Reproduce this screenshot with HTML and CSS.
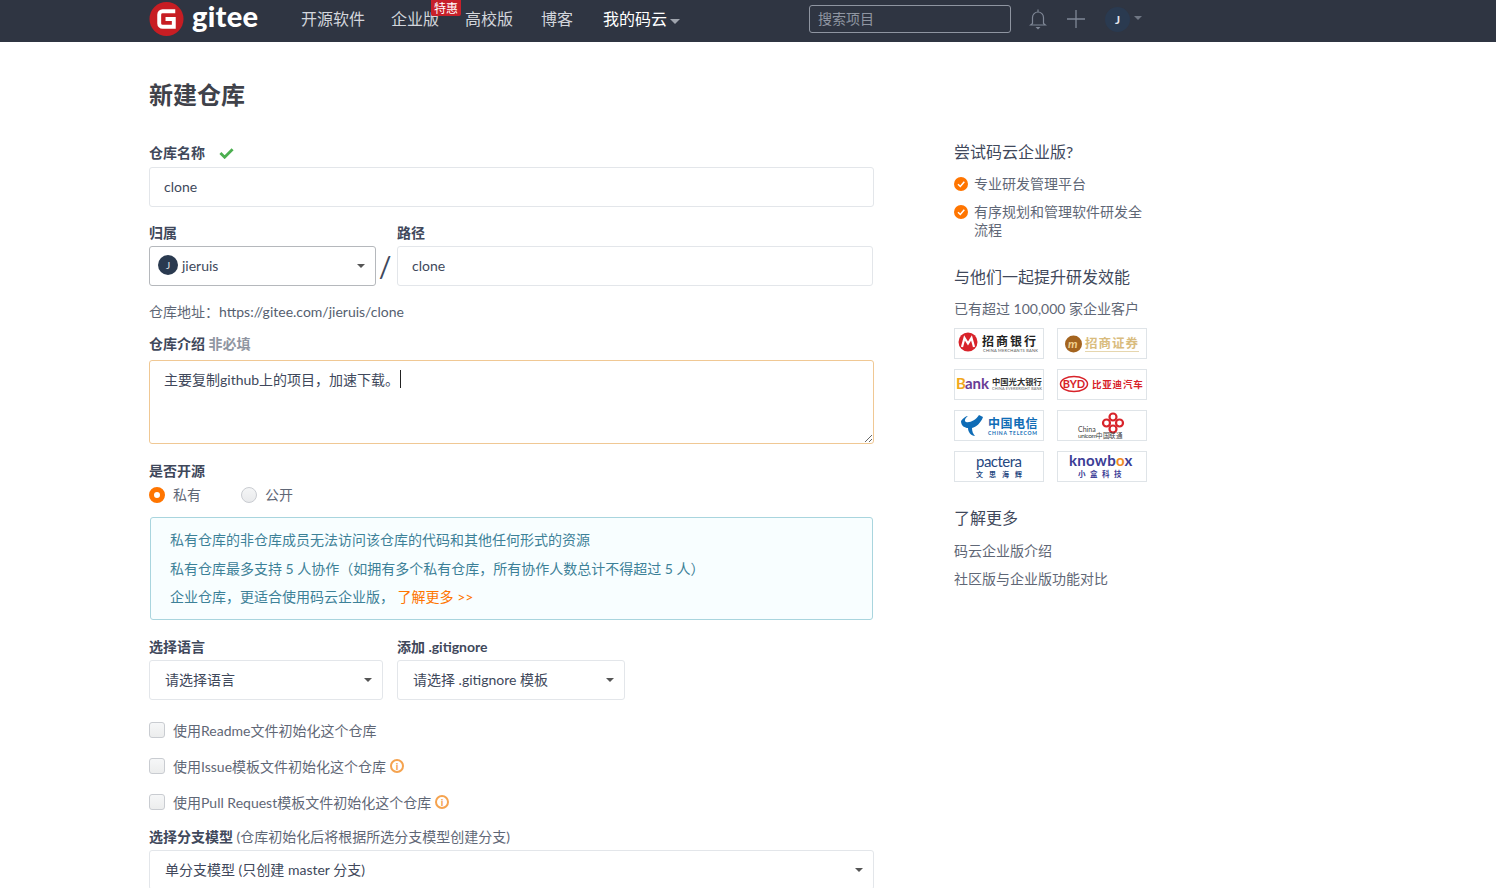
FILE: index.html
```html
<!DOCTYPE html>
<html lang="zh-CN">
<head>
  <meta charset="UTF-8">
  <title>新建仓库 - Gitee</title>
  <link rel="stylesheet" href="styles.css">
</head>
<body>
  <header class="topbar">
    <a class="brand" href="#">
      <svg class="brand-mark" viewBox="0 0 36 36" width="35" height="36">
        <circle cx="18" cy="18" r="17.500" fill="#c71d23"/>
        <path d="M27 10H14a3.500 3.500 0 0 0-3.500 3.500v9a3.500 3.500 0 0 0 3.500 3.500h11.500v-8H17" fill="none" stroke="#fff" stroke-width="4"/>
      </svg>
      <span class="brand-name">gitee</span>
    </a>
    <nav class="nav">
      <a class="nav-link w-open" href="#">开源软件</a>
      <a class="nav-link w-ent" href="#">企业版<span class="nav-badge">特惠</span></a>
      <a class="nav-link w-edu" href="#">高校版</a>
      <a class="nav-link w-blog" href="#">博客</a>
      <a class="nav-link nav-mine" href="#">我的码云<i class="caret caret-nav"></i></a>
    </nav>
    <input class="search" type="text" placeholder="搜索项目">
    <svg class="top-icon bell" viewBox="0 0 18 22" width="18" height="22">
      <path d="M9 1.500v2M3.500 15.500V9.500a5.500 5.500 0 0 1 11 0v6l2 1.500H1.500z" fill="none" stroke="#7f8796" stroke-width="1.200"/>
      <path d="M6.500 19h5L9 21.500z" fill="#7f8796"/>
    </svg>
    <svg class="top-icon plus" viewBox="0 0 18 18" width="18" height="18">
      <path d="M9 0v18M0 9h18" stroke="#7f8796" stroke-width="1.300"/>
    </svg>
    <span class="top-avatar">J</span>
    <i class="caret caret-user"></i>
  </header>

  <div class="page">
    <main class="main">
      <h1 class="title">新建仓库</h1>

      <label class="label label-first">仓库名称
        <svg class="ok" viewBox="0 0 16 12" width="15" height="12"><path d="M1.500 6l4.500 4.500L14.500 2" fill="none" stroke="#4caf50" stroke-width="3"/></svg>
      </label>
      <input class="input" type="text" value="clone">

      <div class="owner-row">
        <div class="owner-col">
          <label class="label">归属</label>
          <div class="select select-owner">
            <span class="owner-avatar">J</span>jieruis
            <i class="caret caret-select"></i>
          </div>
        </div>
        <span class="slash">/</span>
        <div class="path-col">
          <label class="label">路径</label>
          <input class="input" type="text" value="clone">
        </div>
      </div>

      <p class="address">仓库地址：<span class="address-url">https://gitee.com/jieruis/clone</span></p>

      <label class="label label-desc">仓库介绍 <span class="optional">非必填</span></label>
      <div class="desc-wrap">
        <textarea class="desc">主要复制github上的项目，加速下载。</textarea>
        <span class="text-caret"></span>
      </div>

      <label class="label label-open">是否开源</label>
      <div class="radios">
        <span class="radio radio-on"></span><span class="radio-text">私有</span>
        <span class="radio"></span><span class="radio-text">公开</span>
      </div>

      <div class="notice">
        <p>私有仓库的非仓库成员无法访问该仓库的代码和其他任何形式的资源</p>
        <p>私有仓库最多支持 5 人协作（如拥有多个私有仓库，所有协作人数总计不得超过 5 人）</p>
        <p>企业仓库，更适合使用码云企业版， <a class="more" href="#">了解更多 &gt;&gt;</a></p>
      </div>

      <div class="lang-row">
        <div class="lang-col">
          <label class="label">选择语言</label>
          <div class="select select-plain">请选择语言<i class="caret caret-select"></i></div>
        </div>
        <div class="ignore-col">
          <label class="label">添加 .gitignore</label>
          <div class="select select-plain">请选择 .gitignore 模板<i class="caret caret-select"></i></div>
        </div>
      </div>

      <div class="check"><span class="box"></span>使用Readme文件初始化这个仓库</div>
      <div class="check"><span class="box"></span>使用Issue模板文件初始化这个仓库<span class="info">i</span></div>
      <div class="check"><span class="box"></span>使用Pull Request模板文件初始化这个仓库<span class="info">i</span></div>

      <label class="label label-branch">选择分支模型 <span class="label-note">(仓库初始化后将根据所选分支模型创建分支)</span></label>
      <div class="select select-plain select-branch">单分支模型 (只创建 master 分支)<i class="caret caret-select"></i></div>
    </main>

    <aside class="side">
      <h3 class="side-title side-first">尝试码云企业版?</h3>
      <ul class="points">
        <li><span class="tick"><svg viewBox="0 0 14 14" width="14" height="14"><path d="M4 7.200l2.300 2.300L10.300 4.800" fill="none" stroke="#fff" stroke-width="1.500"/></svg></span>专业研发管理平台</li>
        <li><span class="tick"><svg viewBox="0 0 14 14" width="14" height="14"><path d="M4 7.200l2.300 2.300L10.300 4.800" fill="none" stroke="#fff" stroke-width="1.500"/></svg></span>有序规划和管理软件研发全流程</li>
      </ul>

      <h3 class="side-title side-second">与他们一起提升研发效能</h3>
      <p class="side-text">已有超过 100,000 家企业客户</p>

      <div class="logos">
        <div class="logo">
          <svg viewBox="1 1 88 29" width="88" height="29">
            <circle cx="14" cy="14" r="9.500" fill="#d8232a"/>
            <path d="M8 19l2.500-9 3.500 5.500 3.500-5.500 2.500 9" fill="none" stroke="#fff" stroke-width="2.200"/>
            <text x="28" y="18" class="lg-cn" font-size="12" letter-spacing="2" fill="#222">招商银行</text>
            <text x="29" y="24" class="lg-en" font-size="4" textLength="55" fill="#555">CHINA MERCHANTS BANK</text>
          </svg>
        </div>
        <div class="logo">
          <svg viewBox="1 1 88 29" width="88" height="29">
            <circle cx="16.500" cy="16" r="8.500" fill="#a4641f"/>
            <text x="11" y="20" class="lg-en" font-size="12" font-style="italic" font-weight="700" fill="#f1d08f">m</text>
            <text x="28" y="20" class="lg-cn" font-size="12.500" letter-spacing="1" fill="#d9bc7e">招商证券</text>
            <rect x="28" y="23" width="54" height="1" fill="#e6d6ae"/>
          </svg>
        </div>
        <div class="logo">
          <svg viewBox="1 1 88 29" width="88" height="29">
            <text x="2" y="20" class="lg-en" font-size="15" font-weight="700" fill="#f1a81c">B</text>
            <text x="11" y="20" class="lg-en" font-size="15" font-weight="700" textLength="24" fill="#6a3d95">ank</text>
            <text x="38" y="16" class="lg-cn" font-size="8.300" fill="#333">中国光大银行</text>
            <text x="38" y="21" class="lg-en" font-size="3.800" textLength="50" fill="#666">CHINA EVERBRIGHT BANK</text>
          </svg>
        </div>
        <div class="logo">
          <svg viewBox="1 1 88 29" width="88" height="29">
            <ellipse cx="17" cy="15" rx="13.500" ry="7.500" fill="none" stroke="#d8232a" stroke-width="1.500"/>
            <text x="17" y="19" class="lg-en" text-anchor="middle" font-size="11" font-weight="700" fill="#d8232a">BYD</text>
            <text x="35" y="19" class="lg-cn" font-size="9.500" letter-spacing="0.800" fill="#d8232a">比亚迪汽车</text>
          </svg>
        </div>
        <div class="logo">
          <svg viewBox="1 1 88 29" width="88" height="29">
            <path d="M7 11C9 8 12 6 14 6 11 8 10 11 12 12 16 13 22 10 25 5L29 7C27 13 22 17 18 18 18 21 19 24 21 26 17 26 14 22 14 18 11 18 7 16 7 11Z" fill="#0f6cb6"/>
            <text x="34" y="18" class="lg-cn" font-size="12" letter-spacing="0.500" fill="#0f6cb6">中国电信</text>
            <text x="34" y="25" class="lg-en" font-size="5" font-weight="700" textLength="49" fill="#0f6cb6">CHINA TELECOM</text>
          </svg>
        </div>
        <div class="logo">
          <svg viewBox="1 1 88 29" width="88" height="29">
            <g fill="none" stroke="#d8232a" stroke-width="2.200">
              <circle cx="56" cy="7" r="3.500"/><circle cx="49.500" cy="13" r="3.500"/><circle cx="62.500" cy="13" r="3.500"/><circle cx="56" cy="19" r="3.500"/>
            </g>
            <text x="21" y="22" class="lg-en" font-size="7" fill="#444">China</text>
            <text x="21" y="28" class="lg-en" font-size="6.500" textLength="45" fill="#444">unicom中国联通</text>
          </svg>
        </div>
        <div class="logo">
          <svg viewBox="1 1 88 29" width="88" height="29">
            <text x="22" y="16" class="lg-en" font-size="15" font-weight="400" textLength="46" fill="#26487f">pactera</text>
            <text x="22" y="26" class="lg-cn" font-size="7" font-weight="400" letter-spacing="6" fill="#26487f">文思海辉</text>
          </svg>
        </div>
        <div class="logo">
          <svg viewBox="1 1 88 29" width="88" height="29">
            <text x="12" y="15" class="lg-en" font-size="15" font-weight="700" letter-spacing="0.300" fill="#3b3d96">knowb<tspan fill="#f08a24">o</tspan>x</text>
            <text x="21" y="26" class="lg-cn" font-size="7.500" font-weight="400" letter-spacing="4.500" fill="#3b3d96">小盒科技</text>
          </svg>
        </div>
      </div>

      <h3 class="side-title side-third">了解更多</h3>
      <a class="side-link" href="#">码云企业版介绍</a>
      <a class="side-link" href="#">社区版与企业版功能对比</a>
    </aside>
  </div>
</body>
</html>
```

FILE: styles.css
```css
* { box-sizing: border-box; }
html, body { height: 888px; overflow: hidden; }
body {
  margin: 0;
  background: #fff;
  color: #40485b;
  font-family: "Lato", "Noto Sans CJK SC", sans-serif;
  font-size: 14px;
}
a { text-decoration: none; color: inherit; }
p, h1, h3, ul { margin: 0; padding: 0; }

/* top bar */
.topbar {
  display: flex;
  align-items: center;
  height: 42px;
  padding-left: 149px;
  background: #2f3542;
}
.brand { display: flex; align-items: center; width: 152px; }
.brand-name {
  margin-left: 8px;
  color: #fff;
  font-family: "Lato", sans-serif;
  font-size: 29px;
  font-weight: 900;
  line-height: 36px;
  letter-spacing: 0.3px;
  position: relative;
  top: -5px;
}
.brand-mark { flex: none; position: relative; top: -2px; }
.nav { display: flex; width: 508px; margin-bottom: 4px; color: #d3d6dc; font-size: 16px; line-height: 38px; }
.nav-link { position: relative; white-space: nowrap; }
.w-open { width: 90px; }
.w-ent { width: 74px; }
.w-edu { width: 76px; }
.w-blog { width: 62px; }
.nav-mine { color: #fff; }
.nav-badge {
  position: absolute;
  left: 40px;
  top: 0;
  width: 30px;
  height: 16px;
  background: #c7202a;
  border-radius: 0 0 2px 2px;
  color: #fff;
  font-size: 12px;
  line-height: 17px;
  text-align: center;
}
.caret {
  display: inline-block;
  width: 0;
  height: 0;
  border-left: 5px solid transparent;
  border-right: 5px solid transparent;
  border-top: 5px solid #9fa4ad;
}
.caret-nav { margin-left: 3px; vertical-align: 1px; }
.search {
  width: 202px;
  height: 28px;
  margin-bottom: 4px;
  padding: 0 8px 2px;
  background: transparent;
  border: 1px solid #8f95a1;
  border-radius: 3px;
  font: inherit;
  font-size: 14px;
  color: #fff;
}
.search::placeholder { color: #8f95a1; opacity: 1; }
.top-icon { flex: none; margin-bottom: 4px; }
.bell { margin-left: 18px; }
.plus { margin-left: 20px; }
.top-avatar {
  width: 25px;
  height: 25px;
  margin-left: 20px;
  margin-bottom: 4px;
  border-radius: 50%;
  background: #2a3a50;
  color: #e4e7ec;
  font-size: 12px;
  font-weight: 700;
  line-height: 25px;
  text-align: center;
}
.caret-user {
  margin-left: 4px;
  border-left-width: 4px;
  border-right-width: 4px;
  border-top-width: 4px;
  border-top-color: #6f7683;
  position: relative;
  top: -3px;
}

/* page */
.page { display: flex; padding-left: 149px; }
.main { width: 725px; flex: none; }
.side { width: 193px; flex: none; margin-left: 80px; padding-top: 98px; }
.title { margin-top: 36px; font-size: 24px; font-weight: 700; line-height: 34px; color: #40424a; }

.label { display: block; font-size: 14px; font-weight: 700; line-height: 20px; color: #40485b; }
.label-first { margin-top: 31px; margin-bottom: 4px; }
.ok { margin-left: 11px; vertical-align: -1px; }
.input {
  display: block;
  width: 100%;
  height: 40px;
  padding: 0 14px 2px;
  border: 1px solid #e3e6ea;
  border-radius: 3px;
  font: inherit;
  color: #40485b;
  outline: none;
}
.owner-row { display: flex; margin-top: 16px; }
.owner-row .label { margin-bottom: 3px; }
.owner-col { width: 227px; flex: none; }
.path-col { width: 476px; flex: none; }
.slash {
  width: 18px;
  margin-right: 3px;
  flex: none;
  margin-top: 23px;
  font-size: 28px;
  line-height: 40px;
  text-align: center;
  color: #40485b;
}
.select {
  position: relative;
  display: flex;
  align-items: center;
  height: 40px;
  padding-bottom: 2px;
  border: 1px solid #e3e6ea;
  border-radius: 3px;
  color: #40485b;
}
.select-owner { padding-left: 8px; border-color: #b5b8bc; font-size: 14px; }
.owner-avatar {
  width: 20px;
  height: 20px;
  margin-right: 4px;
  border-radius: 50%;
  background: #2a3a50;
  color: #e4e7ec;
  font-size: 10px;
  line-height: 20px;
  text-align: center;
}
.caret-select {
  position: absolute;
  right: 10px;
  top: 17px;
  border-left-width: 4px;
  border-right-width: 4px;
  border-top-width: 4px;
  border-top-color: #555;
}
.address { margin-top: 16px; line-height: 20px; color: #5f6776; }
.address-url { color: #55606f; }
.label-desc { margin-top: 12px; margin-bottom: 6px; }
.optional { color: #8f95a1; }
.desc-wrap { position: relative; height: 84px; }
.desc {
  display: block;
  width: 100%;
  height: 84px;
  padding: 9px 14px;
  border: 1px solid #f0c894;
  border-radius: 3px;
  font: inherit;
  line-height: 20px;
  color: #40485b;
  outline: none;
}
.text-caret { position: absolute; left: 251px; top: 10px; width: 1px; height: 18px; background: #222; }
.label-open { margin-top: 17px; }
.radios { display: flex; align-items: center; height: 20px; margin-top: 4px; }
.radio {
  width: 16px;
  height: 16px;
  border-radius: 50%;
  border: 1px solid #c9ccd1;
  background: linear-gradient(#f4f5f6, #e9eaec);
}
.radio-on { border: 5px solid #ff7500; background: #fff; }
.radio-text { margin-left: 8px; margin-right: 40px; margin-bottom: 2px; color: #5f6776; }
.notice {
  margin-top: 12px;
  margin-left: 1px;
  width: 723px;
  height: 103px;
  padding: 8px 19px;
  background: #f8feff;
  border: 1px solid #a9d5de;
  border-radius: 3px;
  color: #3d8198;
  line-height: 28.500px;
}
.more { color: #ff7500; }
.lang-row { display: flex; margin-top: 17px; }
.lang-row .label { margin-bottom: 3px; }
.lang-col { width: 248px; flex: none; }
.lang-col .select { width: 234px; }
.ignore-col { width: 228px; flex: none; }
.select-plain { padding-left: 15px; font-size: 14px; }
.check { display: flex; align-items: center; height: 20px; margin-top: 16px; color: #5f6776; }
.lang-row + .check { margin-top: 20px; }
.box {
  width: 16px;
  height: 16px;
  margin-right: 8px;
  border: 1px solid #c9ccd1;
  border-radius: 3px;
  background: linear-gradient(#f6f7f8, #eceded);
}
.info {
  width: 14px;
  height: 14px;
  margin-left: 4px;
  border: 2px solid #f5a34f;
  border-radius: 50%;
  color: #f5a34f;
  font-size: 10px;
  font-weight: 900;
  line-height: 10px;
  text-align: center;
}
.label-branch { margin-top: 15px; margin-bottom: 3px; }
.label-note { font-weight: 400; color: #5f6776; }

/* sidebar */
.side-title { font-size: 16px; font-weight: 400; line-height: 22px; color: #40485b; }
.side-first { margin-top: 1px; }
.side-second { margin-top: 27px; }
.side-third { margin-top: 25px; }
.points { list-style: none; margin-top: 12px; color: #5f6776; line-height: 18px; }
.points li { position: relative; padding-left: 20px; margin-bottom: 10px; }
.tick {
  position: absolute;
  left: 0;
  top: 2px;
  width: 14px;
  height: 14px;
  border-radius: 50%;
  background: #ff7500;
}
.tick svg { display: block; }
.side-text { margin-top: 11px; line-height: 20px; color: #5f6776; }
.logos { display: grid; grid-template-columns: 90px 90px; grid-auto-rows: 31px; gap: 10px 13px; margin-top: 9px; }
.logo { border: 1px solid #dfe4e8; overflow: hidden; }
.logo svg { display: block; }
.lg-cn { font-family: "Noto Sans CJK SC", sans-serif; font-weight: 700; }
.lg-en { font-family: "Lato", sans-serif; }
.side-link { display: block; line-height: 20px; margin-top: 8px; color: #5f6776; }
.side-third + .side-link { margin-top: 12px; }
```
